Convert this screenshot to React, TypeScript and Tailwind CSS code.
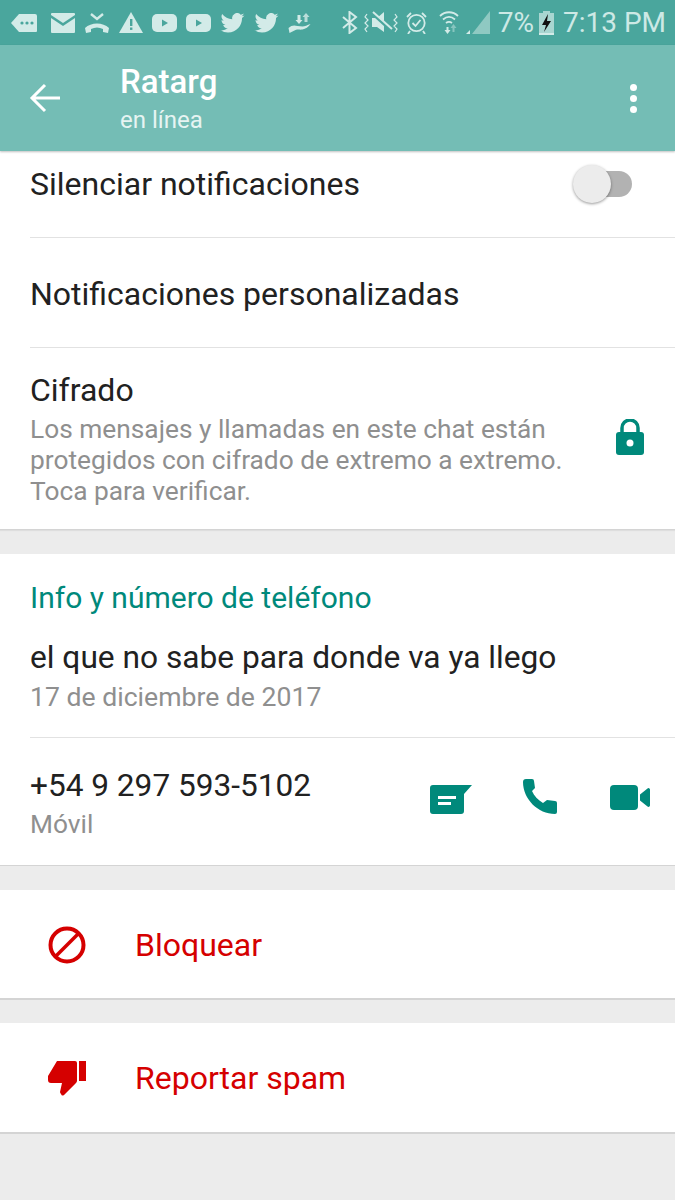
const SB = "#d3ebe8";

function MsgTag() {
  return (
    <svg width="26" height="20" viewBox="0 0 26 20" fill={SB}>
      <path d="M8 1h16a2 2 0 0 1 2 2v15a1 1 0 0 1-1 1H8L0 10z" />
      <circle cx="11" cy="10" r="1.6" fill="#4aa69d" />
      <circle cx="16" cy="10" r="1.6" fill="#4aa69d" />
      <circle cx="21" cy="10" r="1.6" fill="#4aa69d" />
    </svg>
  );
}

function Mail() {
  return (
    <svg width="24" height="20" viewBox="0 0 24 20" fill={SB}>
      <path d="M1 0h22a1 1 0 0 1 1 1v1L12 10 0 2V1a1 1 0 0 1 1-1z" />
      <path d="M0 5l12 8 12-8v14a1 1 0 0 1-1 1H1a1 1 0 0 1-1-1z" />
    </svg>
  );
}

function MissedCall() {
  return (
    <svg width="24" height="20" viewBox="0 0 24 20" fill="none">
      <path d="M6 1l6 5 6-5" stroke={SB} strokeWidth="2.4" />
      <path d="M0 15c6-6 18-6 24 0l-1 5-5-1v-3c-4-2-8-2-12 0v3l-5 1z" fill={SB} />
    </svg>
  );
}

function Warning() {
  return (
    <svg width="24" height="21" viewBox="0 0 24 21" fill={SB}>
      <path d="M12 0l12 21H0z" />
      <rect x="11" y="7" width="2.4" height="7" fill="#4aa69d" />
      <rect x="11" y="15.5" width="2.4" height="2.4" fill="#4aa69d" />
    </svg>
  );
}

function YouTube() {
  return (
    <svg width="25" height="18" viewBox="0 0 25 18" fill={SB}>
      <rect width="25" height="18" rx="5" />
      <path d="M10 5.5l6 3.5-6 3.5z" fill="#4aa69d" />
    </svg>
  );
}

function Twitter() {
  return (
    <svg width="25" height="20" viewBox="0 0 24 20" fill={SB}>
      <path d="M24 2.4a9.6 9.6 0 0 1-2.8.8A5 5 0 0 0 23.3.5a9.8 9.8 0 0 1-3.1 1.2A4.9 4.9 0 0 0 11.8 6.2 13.9 13.9 0 0 1 1.7.9a4.9 4.9 0 0 0 1.5 6.6 4.9 4.9 0 0 1-2.2-.6c0 2.4 1.7 4.4 3.9 4.9a4.9 4.9 0 0 1-2.2.1 4.9 4.9 0 0 0 4.6 3.4A9.9 9.9 0 0 1 0 17.3 13.9 13.9 0 0 0 7.5 19.5c9.1 0 14.3-7.7 14-14.6A10 10 0 0 0 24 2.4z" />
    </svg>
  );
}

function DataSaver() {
  return (
    <svg width="23" height="21" viewBox="0 0 22 21" fill={SB}>
      <path d="M9 3h3v5h2l-3.5 4L7 8h2z" />
      <path d="M17.5 1L21 5h-2v5h-3V5h-2z" opacity=".8" />
      <path d="M0 16c3-3 6-3 9-2l5 .5c2 0 5-1.5 8-2.5-2 3-5 5-8 5.5-3 .5-4-.5-7 .5L1 21z" />
    </svg>
  );
}

function Bluetooth() {
  return (
    <svg width="17" height="23" viewBox="0 0 17 23" fill="none" stroke={SB} strokeWidth="2">
      <path d="M2 6l13 11-6.5 5V1L15 6 2 17" />
    </svg>
  );
}

function VibrateMute() {
  return (
    <svg width="34" height="23" viewBox="0 0 34 23" fill="none">
      <path d="M3 3l-2 3 3 3-3 3 3 3-3 3 2 3M31 3l2 3-3 3 3 3-3 3 3 3-2 3" stroke={SB} strokeWidth="1.2" />
      <path d="M8 7h5l7-6v20l-7-5H8z" fill={SB} />
      <path d="M7 1l21 19" stroke="#4aa69d" strokeWidth="3.5" />
      <path d="M9 1l19 17" stroke={SB} strokeWidth="2" />
    </svg>
  );
}

function Alarm() {
  return (
    <svg width="21" height="23" viewBox="0 0 21 23" fill="none" stroke={SB} strokeWidth="1.8">
      <circle cx="10.5" cy="12" r="8.2" />
      <path d="M6.5 12l3 3 5-6M1 6l4-4M20 6l-4-4M4 20l-2 3M17 20l2 3" />
    </svg>
  );
}

function Wifi() {
  return (
    <svg width="20" height="23" viewBox="0 0 20 23" fill="none" stroke={SB} strokeWidth="1.8">
      <path d="M1 5c5-5 13-5 18 0M4 8.5c4-3.5 8-3.5 12 0M7 12c2-1.5 4-1.5 6 0" />
      <path d="M7.5 16h2v3h2l-3 4-3-4h2z" fill={SB} stroke="none" />
      <path d="M14.5 13l3 4h-2v4h-2v-4h-2z" fill={SB} stroke="none" opacity=".45" />
    </svg>
  );
}

function Signal() {
  return (
    <svg width="24" height="24" viewBox="0 0 24 24" fill={SB}>
      <path d="M24 0v23H6z" opacity=".5" />
      <path d="M0 23l4-4v4z" />
    </svg>
  );
}

function Battery() {
  return (
    <svg width="15" height="24" viewBox="0 0 15 24">
      <path d="M4 0h7v2h4v22H0V2h4z" fill="#a9d6d1" />
      <rect y="22" width="15" height="2" fill={SB} />
      <path d="M9 3L3 14h4l-2 7 7-11H8z" fill="#111" />
    </svg>
  );
}

function Row({ children, border = true }: { children: React.ReactNode; border?: boolean }) {
  return (
    <div className={border ? "ml-[30px] border-b border-[#e2e2e2]" : "ml-[30px]"}>{children}</div>
  );
}

export default function App() {
  return (
    <div className="flex min-h-[1200px] flex-col bg-[#ececec] font-['Roboto',sans-serif] text-[#212121]">
      {/* status bar */}
      <div className="flex h-[45px] items-center bg-[#4aa69d] pl-[11px] pr-[9px]">
        <div className="flex items-center gap-[9px]">
          <MsgTag />
          <div className="ml-[5px]"><Mail /></div>
          <div className="ml-[1px]"><MissedCall /></div>
          <div className="ml-[1px]"><Warning /></div>
          <YouTube />
          <YouTube />
          <Twitter />
          <Twitter />
          <DataSaver />
        </div>
        <div className="ml-auto flex items-center text-[#cde9e5]">
          <Bluetooth />
          <div className="ml-[6px]"><VibrateMute /></div>
          <div className="ml-[8px]"><Alarm /></div>
          <div className="ml-[12px]"><Wifi /></div>
          <div className="ml-[7px]"><Signal /></div>
          <span className="ml-[8px] text-[28px] leading-none">7%</span>
          <div className="ml-[5px]"><Battery /></div>
          <span className="ml-[9px] text-[28px] leading-none">7:13 PM</span>
        </div>
      </div>

      {/* app bar */}
      <div className="relative flex h-[106px] items-center bg-[#74bdb5] pl-[29px] pr-[38px] text-white shadow-[0_1px_2px_rgba(0,0,0,0.25)]">
        <svg width="31" height="30" viewBox="0 0 31 30" fill="none" stroke="white" strokeWidth="3">
          <path d="M31 15H3M16 2L3 15l13 13" />
        </svg>
        <div className="ml-[60px] flex flex-col">
          <span className="text-[33px] font-medium leading-[38px]">Ratarg</span>
          <span className="mt-[6px] text-[24px] leading-[26px] text-[#e6f4f2]">en línea</span>
        </div>
        <div className="ml-auto flex flex-col gap-[4px]">
          <span className="h-[7px] w-[7px] rounded-full bg-white" />
          <span className="h-[7px] w-[7px] rounded-full bg-white" />
          <span className="h-[7px] w-[7px] rounded-full bg-white" />
        </div>
      </div>

      {/* notifications */}
      <div className="border-b border-[#d4d4d4] bg-white shadow-[0_1px_1px_rgba(0,0,0,0.06)]">
        <Row>
          <div className="flex h-[86px] items-center justify-between pb-[20px] pr-[43px]">
            <span className="text-[32px] leading-none">Silenciar notificaciones</span>
            <div className="relative h-[26px] w-[50px] rounded-full bg-[#b2b2b2]">
              <span className="absolute left-[-9px] top-[-6px] h-[38px] w-[38px] rounded-full bg-[#ececec] shadow-[0_1px_3px_rgba(0,0,0,0.4)]" />
            </div>
          </div>
        </Row>
        <Row>
          <div className="flex h-[109px] items-center pt-[3px]">
            <span className="text-[32px] leading-none">Notificaciones personalizadas</span>
          </div>
        </Row>
        <Row border={false}>
          <div className="flex h-[181px] items-start justify-between pr-[31px] pt-[25px]">
            <div>
              <div className="text-[32px] leading-[34px]">Cifrado</div>
              <div className="mt-[7px] text-[26.3px] leading-[31px] text-[#8f8f8f]">
                Los mensajes y llamadas en este chat están
                <br />
                protegidos con cifrado de extremo a extremo.
                <br />
                Toca para verificar.
              </div>
            </div>
            <svg className="mt-[46px] shrink-0" width="28" height="36" viewBox="0 0 28 36">
              <path d="M6 15V9a8 8 0 0 1 16 0v6" fill="none" stroke="#00897b" strokeWidth="3.5" />
              <rect y="13" width="28" height="23" rx="3" fill="#00897b" />
              <circle cx="14" cy="24" r="3.5" fill="white" />
            </svg>
          </div>
        </Row>
      </div>

      {/* info */}
      <div className="mt-[24px] border-b border-[#d4d4d4] bg-white">
        <Row>
          <div className="h-[183px] pt-[27px]">
            <div className="text-[30px] leading-[34px] text-[#00897b]">Info y número de teléfono</div>
            <div className="mt-[26px] text-[31.7px] leading-[34px]">el que no sabe para donde va ya llego</div>
            <div className="mt-[7px] text-[26.6px] leading-[30px] text-[#8f8f8f]">17 de diciembre de 2017</div>
          </div>
        </Row>
        <Row border={false}>
          <div className="flex h-[127px] items-start justify-between pr-[25px] pt-[29px]">
            <div>
              <div className="text-[31.6px] leading-[38px]">+54 9 297 593-5102</div>
              <div className="mt-[4px] text-[26.3px] leading-[30px] text-[#8f8f8f]">Móvil</div>
            </div>
            <div className="mt-[15px] flex items-start">
              <svg width="42" height="29" viewBox="0 0 42 29" className="mt-[3px]">
                <path d="M3 0h39l-8 9v17a3 3 0 0 1-3 3H3a3 3 0 0 1-3-3V3a3 3 0 0 1 3-3z" fill="#00897b" />
                <rect x="8" y="11" width="18" height="3" fill="white" />
                <rect x="8" y="17" width="13" height="3" fill="white" />
              </svg>
              <svg width="35" height="35" viewBox="0 0 35 35" className="ml-[51px] mt-[-3px]">
                <path d="M3 0h6a2 2 0 0 1 2 2l1 7-3 3c2 5 6 9 11 12l4-3 8 1a2 2 0 0 1 2 2v9a2 2 0 0 1-2 2C15 35 0 20 0 3a3 3 0 0 1 3-3z" fill="#00897b" />
              </svg>
              <svg width="40" height="25" viewBox="0 0 40 25" className="ml-[52px] mt-[3px]">
                <rect width="28" height="25" rx="4" fill="#00897b" />
                <path d="M30 9.5L37.5 3.5a1.5 1.5 0 0 1 2.5 1v16a1.5 1.5 0 0 1-2.5 1L30 15.5z" fill="#00897b" />
              </svg>
            </div>
          </div>
        </Row>
      </div>

      {/* block */}
      <div className="mt-[24px] flex h-[110px] items-center border-b-2 border-[#d4d4d4] bg-white pl-[48px] pt-[2px]">
        <svg width="38" height="38" viewBox="0 0 38 38" fill="none" stroke="#d50000" strokeWidth="4">
          <circle cx="19" cy="19" r="16.5" />
          <path d="M7 31L31 7" strokeWidth="3.5" />
        </svg>
        <span className="ml-[49px] text-[32px] leading-none text-[#d50000]">Bloquear</span>
      </div>

      {/* spam */}
      <div className="mt-[23px] flex h-[111px] items-center border-b-2 border-[#d4d4d4] bg-white pl-[48px] pt-[1px]">
        <svg width="38" height="35" viewBox="0 0 38 35" fill="#d50000">
          <path d="M9 0h18a2 2 0 0 1 2 2v18a3 3 0 0 1-1 2L16 34a2 2 0 0 1-3-1 3 3 0 0 1-1-2l2-9H3a3 3 0 0 1-3-3v-4z" />
          <rect x="31" width="7" height="20" />
        </svg>
        <span className="ml-[49px] text-[32px] leading-none text-[#d50000]">Reportar spam</span>
      </div>
    </div>
  );
}
